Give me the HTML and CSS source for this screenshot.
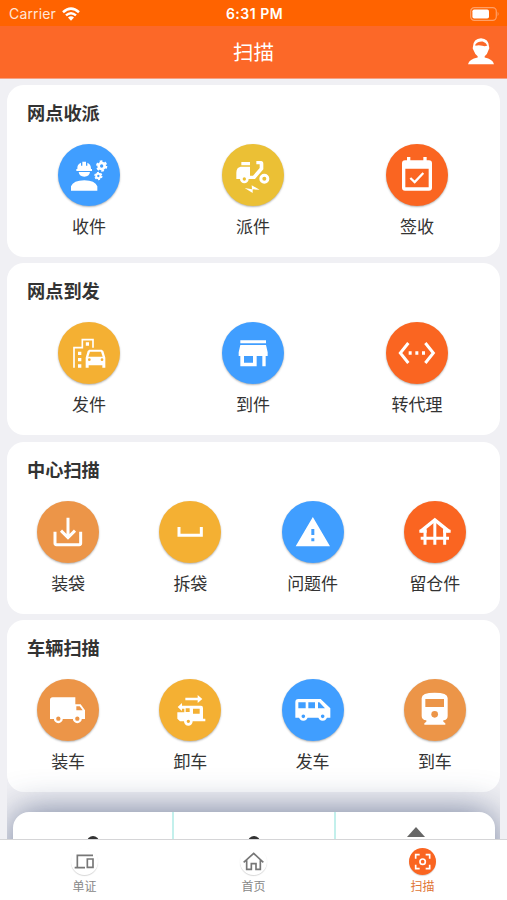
FILE: index.html
```html
<!DOCTYPE html>
<html lang="zh-CN">
<head>
    <meta charset="UTF-8">
    <title>扫描</title>
    <link rel="stylesheet" href="styles.css">
</head>
<body>
<div class="app">
    <div class="status-bar">
        <div class="carrier">
            <span>Carrier</span>
            <svg class="wifi" viewBox="0 0 18 14" fill="none" stroke="#fff" stroke-width="2.5">
                <path d="M1 5.2Q9-2 17 5.2M4 8.4Q9 4 14 8.4"/>
                <path d="M6 10.6Q9 8 12 10.6L9 13.8z" fill="#fff" stroke="none"/>
            </svg>
        </div>
        <div class="time">6:31 PM</div>
        <svg class="battery" viewBox="0 0 30 14">
            <rect x=".7" y=".7" width="25.6" height="12.6" rx="3.6" fill="none" stroke="#ff9f66" stroke-width="1.2"/>
            <rect x="2.4" y="2.4" width="16.6" height="9.2" rx="1.8" fill="#fff"/>
            <path d="M27.6 4.8q2 2.2 0 4.4z" fill="#ff9f66"/>
        </svg>
    </div>
    <div class="nav-bar">
        <h1>扫描</h1>
        <svg class="user" viewBox="0 0 78 80" fill="#fff">
            <path d="M15 25Q16 1 39 0Q62 1 63 25Q66 30 61 37Q59 47 50 54V58Q74 63 78 78H0Q4 63 29 58V54Q20 47 17 37Q12 30 15 25z"/>
            <path d="M22 19Q29 9 44 10Q54 13 58 22Q51 26 43 23Q32 19 22 23z" fill="#fc6828"/>
        </svg>
    </div>

    <div class="content">
        <!-- 网点收派 -->
        <div class="card">
            <h2>网点收派</h2>
            <div class="grid">
                <div class="item">
                    <svg class="icon blue" viewBox="0 0 186 186">
                        <path d="M58 75Q57 60 69 56V65H73V53H84V65H88V56Q99 60 99 75H102V81H55V75zM62 84H96Q94 98 79 98Q64 98 62 84zM39 140V127Q46 109 79 109Q111 109 118 127V140z"/>
                        <g class="line">
                            <circle cx="131" cy="66" r="9" stroke-width="8"/>
                            <circle cx="131" cy="66" r="14" stroke-width="6" stroke-dasharray="8 6.660"/>
                            <circle cx="121" cy="96" r="6.500" stroke-width="6"/>
                            <circle cx="121" cy="96" r="10.500" stroke-width="4" stroke-dasharray="6 5"/>
                        </g>
                    </svg>
                    <span>收件</span>
                </div>
                <div class="item">
                    <svg class="icon yellow" viewBox="0 0 186 186">
                        <path d="M58 54H84V64H58zM56 68H84V95H93L113 72V61H103V51H117Q124 51 124 59V76L99 105H43V86Q43 70 56 68z"/>
                        <circle class="line hole-yellow" cx="67" cy="105" r="9" stroke-width="8"/>
                        <circle class="line" cx="127" cy="104" r="10.500" stroke-width="9"/>
                        <path d="M68 132L90 136L89 124L113 137L92 136L92 147z"/>
                    </svg>
                    <span>派件</span>
                </div>
                <div class="item">
                    <svg class="icon orange" viewBox="0 0 186 186">
                        <path fill-rule="evenodd" d="M63 39H73V49H112V39H122V49H129Q138 49 138 58V131Q138 140 129 140H57Q48 140 48 131V58Q48 49 57 49H63zM58 74V130H128V74z"/>
                        <path class="line" d="M73 102L86 114L112 87" stroke-width="7"/>
                    </svg>
                    <span>签收</span>
                </div>
            </div>
        </div>

        <!-- 网点到发 -->
        <div class="card">
            <h2>网点到发</h2>
            <div class="grid">
                <div class="item">
                    <svg class="icon amber" viewBox="0 0 186 186">
                        <path class="line" d="M48 137V77H73V53H105V77" stroke-width="5"/>
                        <path d="M83.500 61H93V71H83.500zM60 89H70V99H60zM60 108H70V118H60zM60 127H70V137H60z"/>
                        <path fill-rule="evenodd" d="M94 83H131L136 87L142 107V137H133V130H92V137H83V107L89 87zM96 89L91 104H134L129 89z"/>
                        <g class="fill-amber"><circle cx="94" cy="113" r="4"/><circle cx="132" cy="113" r="4"/></g>
                    </svg>
                    <span>发件</span>
                </div>
                <div class="item">
                    <svg class="icon blue" viewBox="0 0 186 186">
                        <path fill-rule="evenodd" d="M55 55H132V64H55zM55 69H132L137 91V102H131V133H121V102H104V133H55V102H50V91zM66 102V122H93V102z"/>
                    </svg>
                    <span>到件</span>
                </div>
                <div class="item">
                    <svg class="icon orange" viewBox="0 0 186 186">
                        <path class="line" d="M67 63L43 93L67 123M118 63L142 93L118 123" stroke-width="9"/>
                        <path d="M68 88H77V98H68zM88 88H97V98H88zM108 88H117V98H108z"/>
                    </svg>
                    <span>转代理</span>
                </div>
            </div>
        </div>

        <!-- 中心扫描 -->
        <div class="card">
            <h2>中心扫描</h2>
            <div class="grid four">
                <div class="item">
                    <svg class="icon tan" viewBox="0 0 186 186">
                        <path class="line" d="M93 50V108M72 89L93 110L114 89M54 92V127Q54 131 58 131H127Q131 131 131 127V92" stroke-width="9"/>
                    </svg>
                    <span>装袋</span>
                </div>
                <div class="item">
                    <svg class="icon amber" viewBox="0 0 186 186">
                        <path class="line" d="M60 78V103H127V78" stroke-width="9"/>
                    </svg>
                    <span>拆袋</span>
                </div>
                <div class="item">
                    <svg class="icon blue" viewBox="0 0 186 186">
                        <path fill-rule="evenodd" d="M92.500 48L144 136H41zM88 84V102H97V84zM88 112V121H97V112z"/>
                    </svg>
                    <span>问题件</span>
                </div>
                <div class="item">
                    <svg class="icon orange" viewBox="0 0 186 186">
                        <path class="line" d="M50 91L92.500 57L135 91" stroke-width="10"/>
                        <path d="M46 86H68V95H46zM117 86H140V95H117z"/>
                        <path class="line" d="M63 84V131M92.500 59V131M122 84V131M50 112H135" stroke-width="9"/>
                    </svg>
                    <span>留仓件</span>
                </div>
            </div>
        </div>

        <!-- 车辆扫描 -->
        <div class="card">
            <h2>车辆扫描</h2>
            <div class="grid four">
                <div class="item">
                    <svg class="icon tan" viewBox="0 0 186 186">
                        <path fill-rule="evenodd" d="M47 55H115V76H131L144 94V120H39V63Q39 55 47 55zM118 82V94H137L128 82z"/>
                        <g class="line hole-tan" stroke-width="7"><circle cx="64" cy="119" r="10"/><circle cx="121" cy="119" r="10"/></g>
                    </svg>
                    <span>装车</span>
                </div>
                <div class="item">
                    <svg class="icon amber" viewBox="0 0 186 186">
                        <path d="M79 56H116V48L130 60L116 72V64H79zM56 84L69 72V80H126Q132 80 132 87V119H139V127H63L55 119V100H76V89H69V96z"/>
                        <path class="fill-amber" d="M102 89H122V104H102zM80 88H92V99H80z"/>
                        <circle class="line hole-amber" cx="88" cy="127" r="9" stroke-width="8"/>
                    </svg>
                    <span>卸车</span>
                </div>
                <div class="item">
                    <svg class="icon blue" viewBox="0 0 186 186">
                        <path fill-rule="evenodd" d="M49 60H116L145 88V116H40V69Q40 60 49 60zM49 70V88H71V70zM79 70V88H99V70zM108 70V88H129L112 70z"/>
                        <g class="line hole-blue" stroke-width="8"><circle cx="64" cy="112" r="9.500"/><circle cx="122" cy="112" r="9.500"/></g>
                    </svg>
                    <span>发车</span>
                </div>
                <div class="item">
                    <svg class="icon tan" viewBox="0 0 186 186">
                        <path fill-rule="evenodd" d="M53 57Q53 41 92 41Q131 41 131 57V111Q131 123 118 124V128L124 133V137H61V133L67 128V124Q53 123 53 111zM64 60V84H120V60z"/>
                        <circle class="fill-tan" cx="92" cy="106" r="10"/>
                    </svg>
                    <span>到车</span>
                </div>
            </div>
        </div>

        <div class="panel">
            <div class="cell"><i class="dot"></i></div>
            <div class="cell"><i class="dot"></i></div>
            <div class="cell"><i class="arrow"></i></div>
        </div>
    </div>

    <div class="tab-bar">
        <div class="tab">
            <svg class="tab-icon" viewBox="0 0 81 81">
                <path class="gray" d="M66 22H19V57M11 59H42" stroke-width="5"/>
                <path class="gray" d="M49 33H66V58H49z" stroke-width="5"/>
            </svg>
            <span>单证</span>
        </div>
        <div class="tab">
            <svg class="tab-icon" viewBox="0 0 81 81">
                <path class="gray" d="M11 43L41 16L70 43M20 37V64H34V47H48V64H61V37" stroke-width="5"/>
            </svg>
            <span>首页</span>
        </div>
        <div class="tab active">
            <svg class="tab-icon" viewBox="0 0 81 81">
                <path class="line" d="M20 32V20H32M50 20H62V32M62 50V62H50M32 62H20V50" stroke-width="5"/>
                <circle class="line" cx="41" cy="41" r="8" stroke-width="5"/>
            </svg>
            <span>扫描</span>
        </div>
    </div>
</div>
</body>
</html>
```

FILE: styles.css
```css
* {
  margin: 0;
  padding: 0;
  box-sizing: border-box;
}
body {
  font-family: "Liberation Sans", "Noto Sans CJK SC", sans-serif;
  color: #333;
}
.app {
  display: flex;
  flex-direction: column;
  height: 900px;
  overflow: hidden;
  background-color: #f0f0f4;
}
.status-bar {
  display: grid;
  grid-template-columns: 1fr auto 1fr;
  align-items: center;
  flex: none;
  height: 26px;
  padding: 1px 7px 0 9px;
  color: #fff;
  font-family: Inter, sans-serif;
  font-size: 14px;
  background-color: #ff6300;
}
.carrier {
  display: flex;
  align-items: center;
  gap: 6px;
  color: #ffe6d8;
  letter-spacing: .15px;
}
.wifi {
  width: 18px;
  height: 14px;
}
.time {
  font-size: 14px;
  font-weight: 600;
  letter-spacing: .5px;
}
.battery {
  width: 30px;
  height: 14px;
  justify-self: end;
}
.nav-bar {
  display: grid;
  grid-template-columns: 1fr auto 1fr;
  align-items: center;
  flex: none;
  height: 53px;
  padding: 0 13px 2px;
  color: #fff;
  background-color: #fc6828;
  border-bottom: 1px solid #f4a184;
}
.nav-bar h1 {
  grid-column: 2;
  font-size: 20.5px;
  font-weight: 400;
}
.user {
  width: 26px;
  height: 27px;
  justify-self: end;
}
.content {
  display: flex;
  flex-direction: column;
  flex: 1;
  gap: 6.4px;
  min-height: 0;
  margin: 0 7px;
  padding-top: 6px;
  overflow: hidden;
}
.card {
  flex: none;
  height: 172px;
  padding-top: 15px;
  border-radius: 17px;
  background-color: #fff;
}
.card h2 {
  padding-left: 20px;
  font-size: 18.2px;
  line-height: 28px;
  font-weight: 700;
}
.grid {
  display: grid;
  grid-template-columns: repeat(3, 1fr);
  padding: 16px 1px 0 0;
}
.grid.four {
  grid-template-columns: repeat(4, 1fr);
  padding-right: 4px;
}
.item {
  display: flex;
  flex-direction: column;
  align-items: center;
  font-size: 17px;
  line-height: 24px;
}
.item span {
  margin-top: 10px;
}
.icon {
  width: 62px;
  height: 62px;
  border-radius: 50%;
  fill: #fff;
  box-shadow: 0 1px 2px rgba(0, 0, 0, .3);
}
.line {
  fill: none;
  stroke: #fff;
}
.blue { background-color: #409eff; }
.yellow { background-color: #ebc035; }
.orange { background-color: #fa6521; }
.amber { background-color: #f4b033; }
.tan { background-color: #ec9548; }
.fill-amber, .hole-amber { fill: #f4b033; }
.fill-tan, .hole-tan { fill: #ec9548; }
.hole-blue { fill: #409eff; }
.hole-yellow { fill: #ebc035; }
.panel {
  display: grid;
  grid-template-columns: 161px 162px 1fr;
  flex: none;
  height: 120px;
  margin: 13.4px 5px 0 6px;
  border-radius: 16px;
  background-color: #fff;
  box-shadow: 0 0 36px rgba(50, 68, 110, .68);
}
.cell {
  display: flex;
  justify-content: center;
  align-items: flex-start;
  border-right: 2px solid #c3f0ec;
}
.cell:last-child {
  border-right: 0;
}
.dot {
  width: 12px;
  height: 12px;
  margin-top: 24px;
  border-radius: 50%;
  background-color: #333;
}
.arrow {
  margin-top: 15px;
  border: 9px solid transparent;
  border-top: 0;
  border-bottom: 10px solid #666;
}
.tab-bar {
  display: grid;
  grid-template-columns: repeat(3, 1fr);
  flex: none;
  height: 61px;
  border-top: 1px solid #d5d5d7;
  background-color: #fff;
}
.tab {
  display: flex;
  flex-direction: column;
  align-items: center;
  padding-top: 8px;
  color: #888;
  font-size: 12px;
  line-height: 18px;
}
.tab span {
  padding-top: 1px;
}
.tab-icon {
  width: 27px;
  height: 27px;
  margin-bottom: 2px;
  border-radius: 50%;
  overflow: visible;
  box-shadow: 0 1px 1px rgba(0, 0, 0, .16);
}
.gray {
  fill: none;
  stroke: #777;
}
.active {
  color: #df7436;
}
.active .tab-icon {
  background-color: #fa6521;
}
```
